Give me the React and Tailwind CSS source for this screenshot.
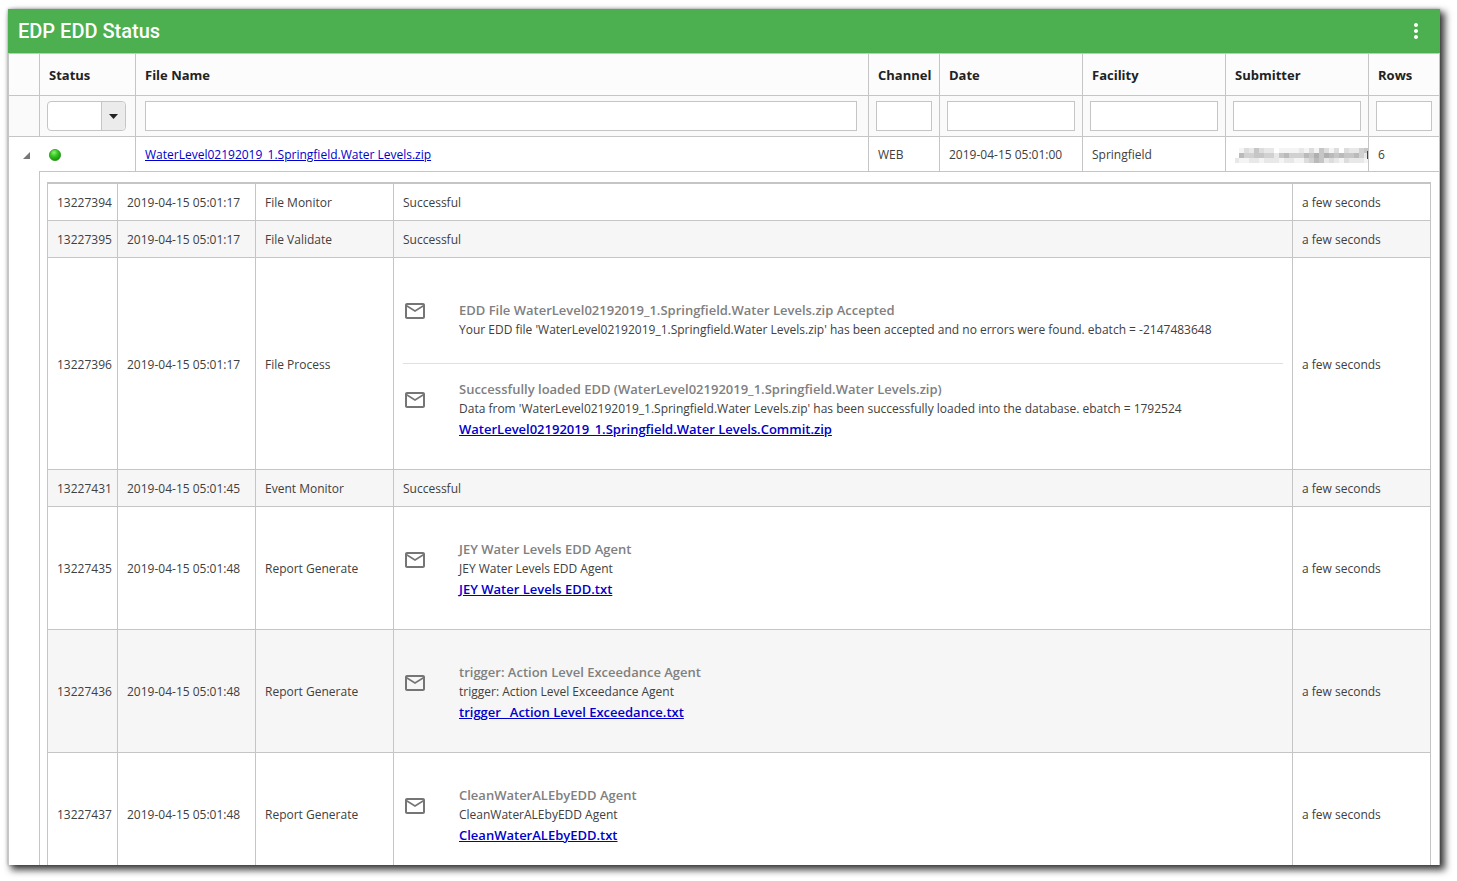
import React, { useState } from 'react'
import { MdMailOutline, MdMoreVert } from 'react-icons/md'

const events = [
  { id: '13227394', date: '2019-04-15 05:01:17', type: 'File Monitor', result: 'Successful' },
  { id: '13227395', date: '2019-04-15 05:01:17', type: 'File Validate', result: 'Successful' },
  {
    id: '13227396',
    date: '2019-04-15 05:01:17',
    type: 'File Process',
    height: 'h-[212px]',
    mails: [
      {
        title: 'EDD File WaterLevel02192019_1.Springfield.Water Levels.zip Accepted',
        body: "Your EDD file 'WaterLevel02192019_1.Springfield.Water Levels.zip' has been accepted and no errors were found. ebatch = -2147483648",
      },
      {
        title: 'Successfully loaded EDD (WaterLevel02192019_1.Springfield.Water Levels.zip)',
        body: "Data from 'WaterLevel02192019_1.Springfield.Water Levels.zip' has been successfully loaded into the database. ebatch = 1792524",
        file: 'WaterLevel02192019_1.Springfield.Water Levels.Commit.zip',
      },
    ],
  },
  { id: '13227431', date: '2019-04-15 05:01:45', type: 'Event Monitor', result: 'Successful' },
  {
    id: '13227435',
    date: '2019-04-15 05:01:48',
    type: 'Report Generate',
    height: 'h-[123px]',
    mails: [
      {
        title: 'JEY Water Levels EDD Agent',
        body: 'JEY Water Levels EDD Agent',
        file: 'JEY Water Levels EDD.txt',
      },
    ],
  },
  {
    id: '13227436',
    date: '2019-04-15 05:01:48',
    type: 'Report Generate',
    height: 'h-[123px]',
    mails: [
      {
        title: 'trigger: Action Level Exceedance Agent',
        body: 'trigger: Action Level Exceedance Agent',
        file: 'trigger_ Action Level Exceedance.txt',
      },
    ],
  },
  {
    id: '13227437',
    date: '2019-04-15 05:01:48',
    type: 'Report Generate',
    height: 'h-[123px]',
    mails: [
      {
        title: 'CleanWaterALEbyEDD Agent',
        body: 'CleanWaterALEbyEDD Agent',
        file: 'CleanWaterALEbyEDD.txt',
      },
    ],
  },
]

const columns = ['Status', 'File Name', 'Channel', 'Date', 'Facility', 'Submitter', 'Rows']

// One digit per mosaic cell, 0 is blank and 9 is darkest
const mosaic = [
  '013253220111121315313032245',
  '064455442564446575765655642',
  '211221222122113465232132221',
]

const RedactedName = () => (
  <svg
    width="135"
    height="15"
    viewBox="0 0 135 15"
    shapeRendering="crispEdges"
    role="img"
    aria-label="Hidden submitter"
    className="max-w-none"
  >
    {mosaic.map((row, y) =>
      row.split('').map((n, x) => (
        <rect
          key={`${x}-${y}`}
          x={x * 5 - 1}
          y={y * 5}
          width="5"
          height="5"
          fill="#000"
          fillOpacity={n * 0.045}
        />
      ))
    )}
    <path d="M132 3h1v8h-1z" fill="#444" />
  </svg>
)

const StatusDot = () => (
  <svg width="12" height="12" viewBox="0 0 12 12" role="img" aria-label="Success">
    <defs>
      <radialGradient id="dot" cx="0.4" cy="0.28" r="0.75">
        <stop offset="0" stopColor="#8df07a" />
        <stop offset="0.45" stopColor="#35c81e" />
        <stop offset="1" stopColor="#138c08" />
      </radialGradient>
    </defs>
    <circle cx="6" cy="6" r="5.6" fill="url(#dot)" stroke="#1c8f10" strokeWidth="0.7" />
  </svg>
)

const MailItem = ({ mail }) => (
  <li className="flex min-h-[89px] items-center border-[#e0e0e0] not-last:border-b">
    <MdMailOutline className="mb-4 mr-8 h-6 w-6 shrink-0 text-[#757575]" />
    <div className="min-w-0 pt-[2px] leading-5">
      <h3 className="text-[13px] font-semibold text-[#808080]">{mail.title}</h3>
      <p>{mail.body}</p>
      {mail.file && (
        <a href="#" className="block text-[13px] font-semibold text-[#0000cc] underline">
          {mail.file}
        </a>
      )}
    </div>
  </li>
)

const EventTable = () => (
  <table className="w-full table-fixed border-separate border-spacing-0 border-t-2 border-r border-[#c5c5c5] text-left">
    <colgroup>
      <col className="w-[70px]" />
      <col className="w-[138px]" />
      <col className="w-[138px]" />
      <col />
      <col className="w-[138px]" />
    </colgroup>
    <tbody className="[&_td]:border-b [&_td]:border-l [&_td]:border-[#c5c5c5] [&_td]:pl-[9px]">
      {events.map((event) => (
        <tr key={event.id} className={`${event.height || 'h-[37px]'} even:bg-[#f6f6f6]`}>
          <td className="pt-[2px]">{event.id}</td>
          <td className="pt-[2px]">{event.date}</td>
          <td className="pt-[2px]">{event.type}</td>
          {event.mails ? (
            <td className="pr-[9px]">
              <ul className="py-4">
                {event.mails.map((mail) => (
                  <MailItem key={mail.title} mail={mail} />
                ))}
              </ul>
            </td>
          ) : (
            <td className="pt-[2px]">{event.result}</td>
          )}
          <td className="pt-[2px]">a few seconds</td>
        </tr>
      ))}
    </tbody>
  </table>
)

const FilterInput = ({ label }) => (
  <input
    type="text"
    aria-label={`Filter by ${label}`}
    className="block h-[30px] w-full border border-[#c5c5c5] bg-white px-1 outline-none"
  />
)

const StatusFilter = () => (
  <div className="relative">
    <select
      aria-label="Filter by Status"
      className="block h-[30px] w-full appearance-none rounded border border-[#c5c5c5] bg-white pl-1 pr-6 outline-none"
    >
      <option></option>
      <option>Success</option>
      <option>Failed</option>
    </select>
    <span className="pointer-events-none absolute inset-y-px right-px flex w-6 items-center justify-center rounded-r border-l border-[#c5c5c5] bg-[#ebebeb]">
      <svg width="9" height="5" viewBox="0 0 9 5" aria-hidden="true">
        <path d="M0 0h9L4.5 5z" fill="#222" />
      </svg>
    </span>
  </div>
)

const App = () => {
  const [expanded, setExpanded] = useState(true)

  return (
    <div className="flex h-screen flex-col overflow-hidden bg-white pt-[9px] pr-[17px] pb-4 pl-2 font-['Open_Sans','Noto_Sans',sans-serif] text-[12px] text-[#404040]">
      <main className="min-h-0 flex-1 overflow-hidden bg-white shadow-[4px_4px_7px_1px_rgba(0,0,0,0.75),0_0_3px_rgba(0,0,0,0.3)]">
        <header className="flex h-11 items-center justify-between bg-[#4caf50] pr-3 pl-[10px] text-white">
          <h1 className="font-['Roboto',sans-serif] text-xl font-medium">EDP EDD Status</h1>
          <button type="button" aria-label="More options">
            <MdMoreVert className="h-6 w-6" />
          </button>
        </header>

        <table className="w-full table-fixed border-separate border-spacing-0 text-left">
          <colgroup>
            <col className="w-[31px]" />
            <col className="w-[96px]" />
            <col />
            <col className="w-[71px]" />
            <col className="w-[143px]" />
            <col className="w-[143px]" />
            <col className="w-[143px]" />
            <col className="w-[72px]" />
          </colgroup>
          <thead className="[&_td]:border-b [&_td]:border-l [&_td]:border-[#c5c5c5] [&_th]:border-b [&_th]:border-l [&_th]:border-[#c5c5c5]">
            <tr className="h-[43px] bg-[#fcfcfc] text-[13px] text-[#222] [&>*]:border-t">
              <td></td>
              {columns.map((name) => (
                <th key={name} scope="col" className="pt-[2px] pl-[9px] font-bold last:border-r">
                  {name}
                </th>
              ))}
            </tr>
            <tr className="h-[41px] bg-[#fafafa]">
              <td></td>
              <td className="pr-[9px] pl-[7px]">
                <StatusFilter />
              </td>
              <td className="pr-[11px] pl-[9px]">
                <FilterInput label="File Name" />
              </td>
              {columns.slice(2).map((name) => (
                <td key={name} className="px-[7px] last:border-r">
                  <FilterInput label={name} />
                </td>
              ))}
            </tr>
          </thead>
          <tbody>
            <tr className="h-[35px] [&>td]:border-[#c5c5c5] [&>td]:border-b [&>td]:border-l [&>td]:pt-[2px] [&>td]:pl-[9px]">
              <td className="border-b-0!">
                <button
                  type="button"
                  aria-label="Toggle details"
                  aria-expanded={expanded}
                  onClick={() => setExpanded(!expanded)}
                  className="flex h-4 w-4 justify-center pt-1"
                >
                  <svg width="7" height="7" viewBox="0 0 7 7">
                    <path d="M7 0v7H0z" fill="#777" />
                  </svg>
                </button>
              </td>
              <td className="border-l-0! pl-[10px]!">
                <StatusDot />
              </td>
              <td>
                <a href="#" className="text-[#0000cc] underline">
                  WaterLevel02192019_1.Springfield.Water Levels.zip
                </a>
              </td>
              <td>WEB</td>
              <td>2019-04-15 05:01:00</td>
              <td>Springfield</td>
              <td className="overflow-hidden">
                <RedactedName />
              </td>
              <td className="border-r">6</td>
            </tr>
            {expanded && (
              <tr>
                <td className="border-l border-[#c5c5c5]"></td>
                <td colSpan={7} className="border-x border-[#c5c5c5] pt-[10px] pr-2 pl-[7px]">
                  <EventTable />
                </td>
              </tr>
            )}
          </tbody>
        </table>
      </main>
    </div>
  )
}

export default App
